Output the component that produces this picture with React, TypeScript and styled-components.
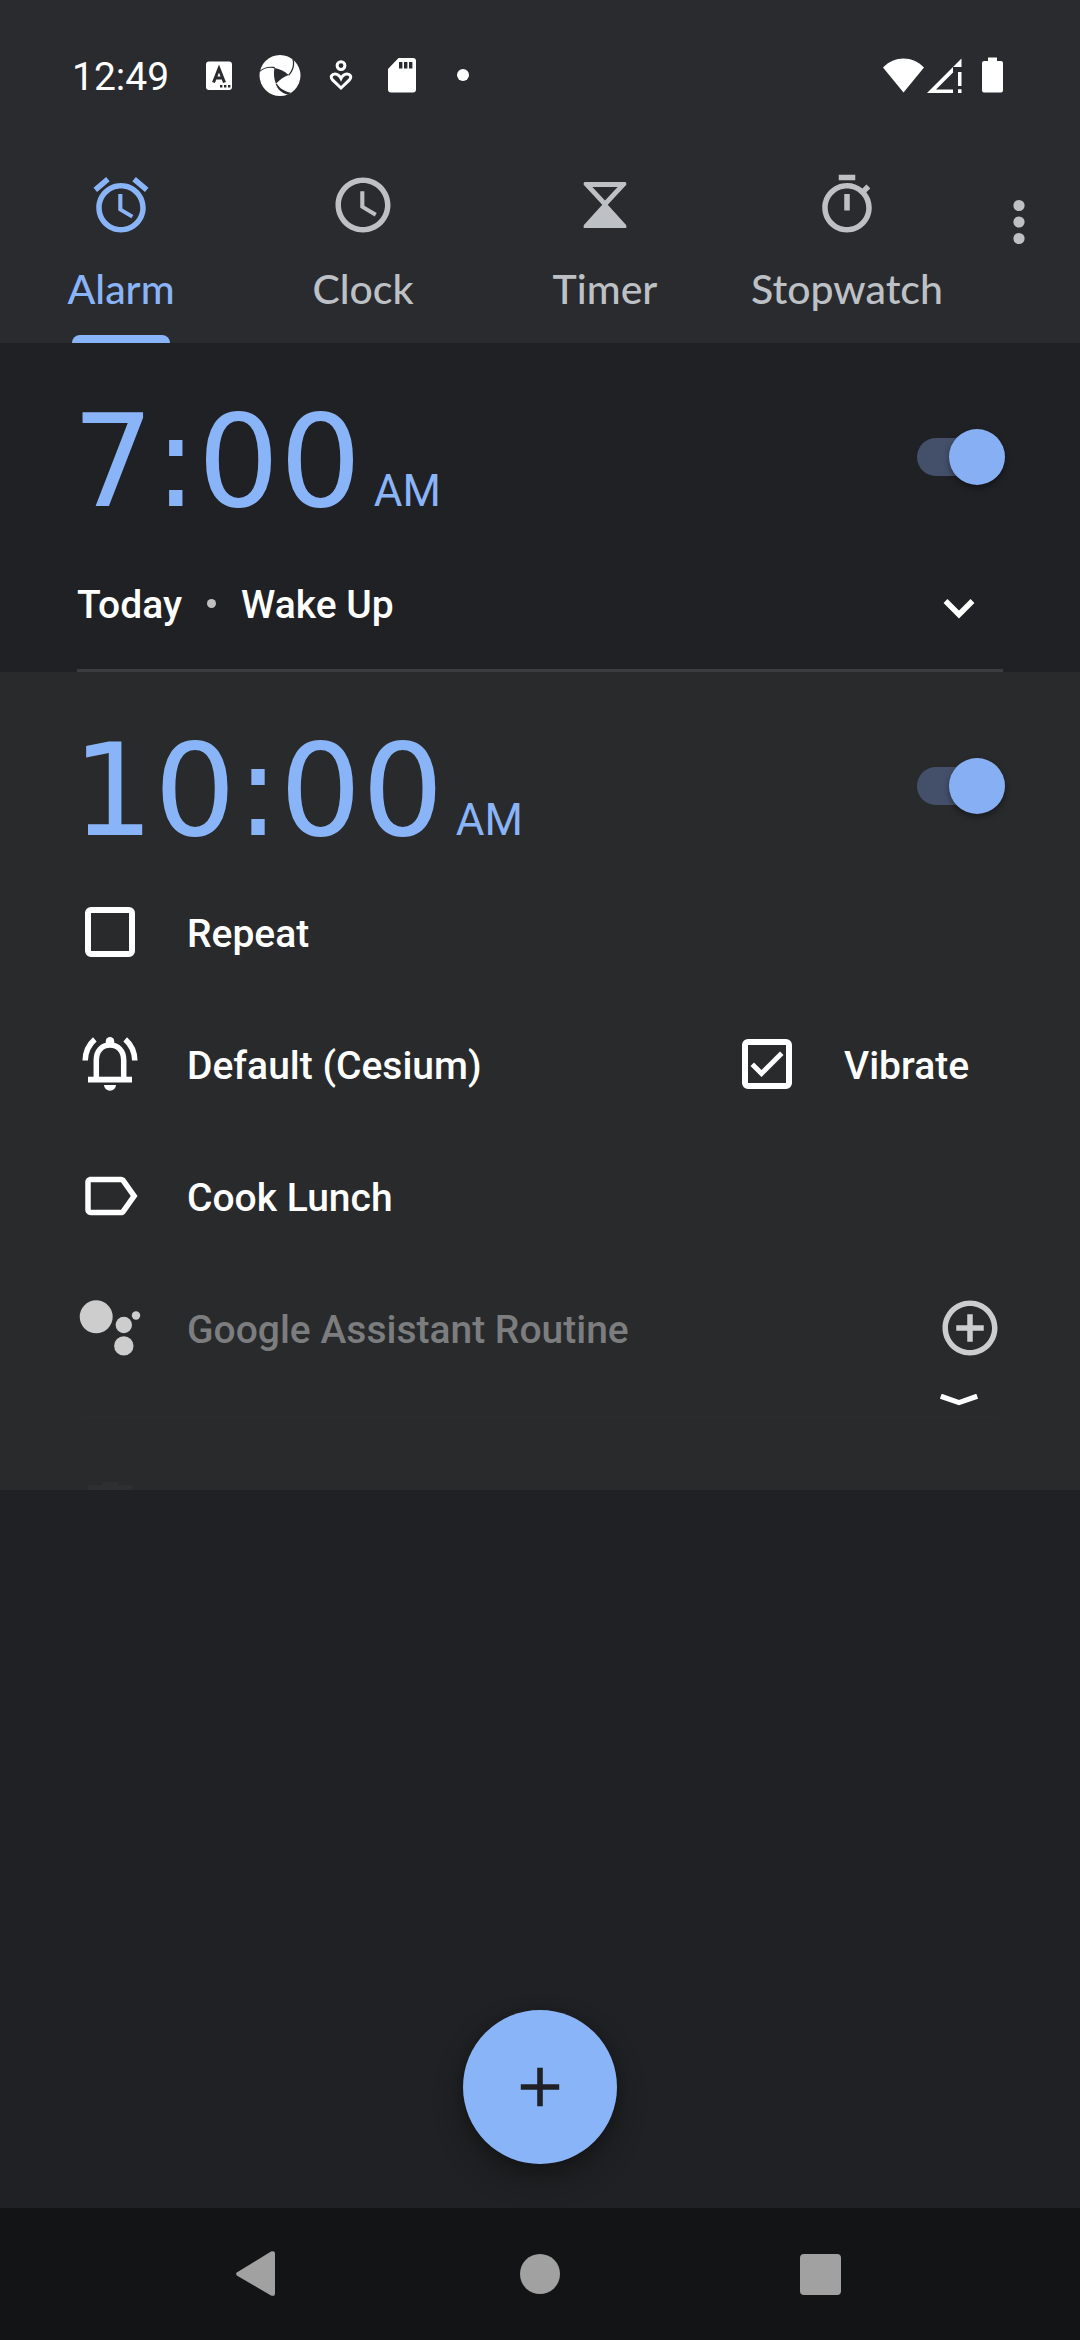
import React, { useState } from "react";
import styled, { createGlobalStyle, css } from "styled-components";

const color = {
  page: "#202124",
  header: "#2a2b2f",
  expanded: "#292a2c",
  nav: "#131416",
  accent: "#8ab4f8",
  muted: "#bdc1c6",
  divider: "#3a3c40",
  disabled: "#7c7d7f",
  soft: "#cdcdcd",
};

const GlobalStyle = createGlobalStyle`
  * { box-sizing: border-box; }
  body { margin: 0; background: ${color.page}; }
  button {
    margin: 0; padding: 0; border: 0; background: none;
    color: inherit; font: inherit; text-align: left; cursor: pointer;
  }
  svg { display: block; flex: none; }
`;

const Screen = styled.div`
  min-height: 100vh;
  display: flex;
  flex-direction: column;
  background: ${color.page};
  color: #fff;
  font-family: Roboto, "Liberation Sans", sans-serif;
  font-size: 39px;
  line-height: 48px;
`;

const StatusBar = styled.div`
  height: 136px;
  padding: 16px 77px 0 72px;
  display: flex;
  align-items: center;
  background: ${color.header};
`;

const StatusTime = styled.time`
  margin-right: 19px;
  padding-top: 2px;
`;

const Notice = styled.span`
  width: 61px;
  display: flex;
  justify-content: center;
`;

const Signals = styled.div`
  margin-left: auto;
  display: flex;
  gap: 3px;
`;

const Battery = styled.span`
  margin-left: 17px;
`;

const Header = styled.header`
  display: flex;
  height: 207px;
  background: ${color.header};
`;

const Tabs = styled.nav`
  flex: 1;
  display: flex;
`;

const Tab = styled.button<{ $active: boolean }>`
  flex: 1 1 0;
  display: flex;
  flex-direction: column;
  align-items: center;
  padding-top: 36px;
  color: ${(p) => (p.$active ? color.accent : color.muted)};
  font-family: Lato, Roboto, sans-serif;
  font-weight: 500;
  font-size: 41px;
  line-height: 48px;
`;

const TabLabel = styled.span`
  margin-top: 27px;
`;

const TabIndicator = styled.span`
  width: 98px;
  height: 8px;
  margin-top: auto;
  border-radius: 8px 8px 0 0;
  background: ${color.accent};
`;

const MenuButton = styled.button`
  width: 112px;
  padding: 0 10px 35px 0;
  display: flex;
  align-items: center;
  justify-content: center;
  color: ${color.muted};
`;

const Main = styled.main`
  flex: 1;
  display: flex;
  flex-direction: column;
`;

const Card = styled.section<{ $open: boolean }>`
  padding: 0 77px;
  background: ${(p) => (p.$open ? color.expanded : color.page)};
`;

const TimeRow = styled.div`
  height: 194px;
  padding-top: 34px;
  display: flex;
  align-items: center;
  justify-content: space-between;
`;

const TimeButton = styled.button`
  margin-left: -5px;
  padding-top: 8px;
  display: flex;
  align-items: baseline;
  gap: 12px;
  color: ${color.accent};
`;

const Digits = styled.span`
  font-family: "DejaVu Sans", sans-serif;
  font-size: 129px;
  line-height: 148px;
`;

const Meridiem = styled.span`
  font-size: 44px;
`;

const Switch = styled.input`
  appearance: none;
  position: relative;
  flex: none;
  width: 86px;
  height: 38px;
  margin: 0;
  border-radius: 19px;
  background: linear-gradient(90deg, #44506a 0 78px, transparent 78px);
  cursor: pointer;

  &::before {
    content: "";
    position: absolute;
    top: -9px;
    right: -2px;
    width: 56px;
    height: 56px;
    border-radius: 50%;
    background: #87aff4;
    box-shadow: 0 3px 6px rgba(0, 0, 0, 0.4);
  }

  &:not(:checked)::before {
    right: 32px;
    background: ${color.soft};
  }
`;

const Summary = styled.div`
  height: 135px;
  display: flex;
  align-items: center;
  border-bottom: 3px solid ${color.divider};
  font-weight: 500;
`;

const RowText = styled.span`
  padding-top: 4px;
`;

const Bullet = styled.span`
  width: 9px;
  height: 9px;
  margin: 0 25px;
  border-radius: 50%;
  background: #c0c0c0;
`;

const ExpandButton = styled.button`
  width: 88px;
  margin-left: auto;
  display: flex;
  justify-content: center;
`;

const OptionRow = styled.div`
  height: 132px;
  display: flex;
  align-items: center;
  justify-content: space-between;
  font-weight: 500;
`;

const option = css`
  display: flex;
  align-items: center;
  gap: 44px;
`;

const OptionLabel = styled.label<{ $side?: boolean }>`
  ${option}
  width: ${(p) => (p.$side ? "269px" : "auto")};
  cursor: pointer;
`;

const OptionButton = styled.button<{ $dim?: boolean }>`
  ${option}
  color: ${(p) => (p.$dim ? color.disabled : "#fff")};
`;

const AddRoutine = styled.button`
  color: ${color.soft};
`;

const Checkbox = styled.input`
  appearance: none;
  position: relative;
  width: 50px;
  height: 50px;
  margin: 0 8px;
  border: 6px solid #fff;
  border-radius: 6px;
  cursor: pointer;

  &:checked::after {
    content: "";
    position: absolute;
    inset: -6px;
    background: #fff;
    clip-path: polygon(17% 54%, 24% 47%, 39% 62%, 76% 25%, 83% 32%, 39% 76%);
  }
`;

const CardFooter = styled.div`
  height: 96px;
  display: flex;
  flex-direction: column;
  overflow: hidden;
`;

const FaintLine = styled.hr`
  width: calc(100% - 12px);
  height: 2px;
  margin: 8px 6px 0;
  border: 0;
  background: #2b2c2e;
`;

const FadingAction = styled.div`
  margin: auto 0 0 11px;
  color: #2e2f31;
`;

const AddAlarm = styled.button`
  width: 154px;
  height: 154px;
  margin: auto auto 44px;
  display: flex;
  align-items: center;
  justify-content: center;
  border-radius: 50%;
  background: ${color.accent};
  color: ${color.page};
  box-shadow: 0 14px 26px rgba(18, 18, 18, 0.6), 0 2px 8px rgba(18, 18, 18, 0.5);
`;

const NavBar = styled.footer`
  height: 132px;
  display: flex;
  justify-content: center;
  background: ${color.nav};
`;

const NavButton = styled.button`
  width: 280px;
  display: flex;
  align-items: center;
  justify-content: center;
  color: #a1a1a1;
`;

const Icon = ({ d }: { d: string }) => (
  <svg width="66" height="66" viewBox="0 0 24 24" fill="currentColor" aria-hidden="true">
    <path fillRule="evenodd" d={d} />
  </svg>
);

const tabs = [
  {
    name: "Alarm",
    d: "M22 5.72l-4.6-3.86-1.29 1.53 4.6 3.86L22 5.72zM7.88 3.39L6.6 1.86 2 5.71l1.29 1.53 4.59-3.85zM12.5 8H11v6l4.75 2.85.75-1.23-4-2.37V8zM12 4c-4.97 0-9 4.03-9 9s4.02 9 9 9c4.97 0 9-4.03 9-9s-4.03-9-9-9zm0 16c-3.87 0-7-3.13-7-7s3.13-7 7-7 7 3.13 7 7-3.13 7-7 7z",
  },
  {
    name: "Clock",
    d: "M11.99 2C6.47 2 2 6.48 2 12s4.47 10 9.99 10C17.52 22 22 17.52 22 12S17.52 2 11.99 2zM12 20c-4.42 0-8-3.58-8-8s3.58-8 8-8 8 3.58 8 8-3.58 8-8 8zM12.5 7H11v6l5.25 3.15.75-1.23-4.5-2.67z",
  },
  {
    name: "Timer",
    d: "M4.6 3.65H19.4L19.75 4V4.6L13 11.9L19.75 19.4V20.35H4.25V19.4L11 11.9L4.25 4.6V4ZM7.4 5.45L12 10.4L16.6 5.45Z",
  },
  {
    name: "Stopwatch",
    d: "M15 1H9v2h6V1zm-4 13h2V8h-2v6zm8.03-6.61l1.42-1.42c-.43-.51-.9-.99-1.41-1.41l-1.42 1.42C16.07 4.74 14.12 4 12 4c-4.97 0-9 4.03-9 9s4.02 9 9 9 9-4.03 9-9c0-2.12-.74-4.07-1.97-5.61zM12 20c-3.87 0-7-3.13-7-7s3.13-7 7-7 7 3.13 7 7-3.13 7-7 7z",
  },
];

const BellIcon = () => (
  <svg width="66" height="66" viewBox="0 0 66 66" fill="none" stroke="#fff" strokeWidth="5.5" aria-hidden="true">
    <path d="M19.3 47V29C19.3 20 25 14 33 14S46.7 20 46.7 29V47" />
    <path d="M8.2 29.5C8.4 21 12 13.5 17.8 8.4M57.8 29.5C57.6 21 54 13.5 48.2 8.4" />
    <g fill="#fff" stroke="none">
      <rect x="11" y="45.7" width="44" height="5.8" />
      <rect x="28.8" y="6" width="8.4" height="10" rx="4.2" />
      <path d="M27 54h12a6 5.8 0 0 1-12 0z" />
    </g>
  </svg>
);

const AssistantIcon = () => (
  <svg width="66" height="66" viewBox="0 0 66 66" fill={color.soft} aria-hidden="true">
    <circle cx="19.2" cy="21.8" r="16.5" />
    <circle cx="46.8" cy="30" r="8.2" />
    <circle cx="46.8" cy="50.9" r="9.7" />
    <circle cx="59" cy="20.5" r="4.2" />
  </svg>
);

const StatusIcons = () => (
  <>
    <Notice>
      <svg width="26" height="42" viewBox="0 0 26 42" aria-label="Keyboard">
        <rect y="6.5" width="26" height="28.5" rx="3" fill="#fff" />
        <path d="M7.5 27.5L13 13.5L18.5 27.5M9.5 23H16.5" fill="none" stroke="#2a2b2f" strokeWidth="3" />
        <path d="M14 30h2.4v2.4H14zM18 30h2.4v2.4H18zM22 30h2.4v2.4H22z" fill="#2a2b2f" />
      </svg>
    </Notice>
    <Notice>
      <svg width="42" height="42" viewBox="-21 -20.5 42 42" aria-label="Pinwheel">
        <circle r="20.5" fill="#fff" />
        <g fill="#2a2b2f">
          <path d="M-5.6 -7.6C0 -6.6 5 -4 8.6 -.6C4 1.2 -.5 4 -4 8.3C-6 3.4 -6.6 -2 -5.6 -7.6Z" />
          <path d="M12.4 -16.4C13.8 -10.6 12.4 -5 8.2 -.8L9 .2C13.6 -4.4 15 -10 13.8 -15.4Z" />
          <path d="M-20.6 -3.2C-16 -7.4 -10.5 -8.6 -5 -7L-5.2 -8.4C-11 -9.6 -16 -8.2 -20 -5Z" />
          <path d="M8.2 19.2C1.6 17.8 -2.6 13.6 -4.4 8L-3 8.6C-.2 13 4.6 16.2 11 17.2Z" />
        </g>
      </svg>
    </Notice>
    <Notice>
      <svg width="24" height="42" viewBox="0 0 24 42" fill="none" stroke="#fff" strokeWidth="3" aria-label="Wellbeing">
        <circle cx="12" cy="10.6" r="3.9" />
        <path d="M12 33L3.8 25.2C.6 21.8 3 18.8 6.2 18.9C9 19 10.6 20.6 12 23.4C13.4 20.6 15 19 17.8 18.9C21 18.8 23.4 21.8 20.2 25.2Z" />
      </svg>
    </Notice>
    <Notice>
      <svg width="28" height="42" viewBox="0 0 28 42" aria-label="SD card">
        <path d="M10.5 3H25a3 3 0 0 1 3 3V34.5a3 3 0 0 1-3 3H3a3 3 0 0 1-3-3V14Z" fill="#fff" />
        <path d="M11 7h3.4v6.5H11zM16 7h3.4v6.5H16zM21 7h3.4v6.5H21z" fill="#2a2b2f" />
      </svg>
    </Notice>
    <Notice>
      <svg width="12" height="42" viewBox="0 0 12 42" aria-label="More notifications">
        <circle cx="6" cy="20" r="6" fill="#fff" />
      </svg>
    </Notice>
    <Signals>
      <svg width="41" height="42" viewBox="0 0 41 42" aria-label="Wi-Fi">
        <path d="M0 12.5C11.5 .5 29.5 .5 41 12.5L20.5 37.5Z" fill="#fff" />
      </svg>
      <svg width="35" height="42" viewBox="0 0 35 42" aria-label="Mobile signal">
        <path fillRule="evenodd" fill="#fff" d="M0 38L34.5 3.5V12H26V38ZM9 34.5H26V17.5Z" />
        <path d="M31 17h3.5v14H31zM31 34.2h3.5V38H31z" fill="#fff" />
      </svg>
      <Battery>
        <svg width="21" height="42" viewBox="0 0 21 42" aria-label="Battery">
          <path d="M6 2.5h9V6h4a2 2 0 0 1 2 2V35.5a2 2 0 0 1-2 2H2a2 2 0 0 1-2-2V8a2 2 0 0 1 2-2H6Z" fill="#fff" />
        </svg>
      </Battery>
    </Signals>
  </>
);

function AlarmTime({ time, period }: { time: string; period: string }) {
  const [on, setOn] = useState(true);
  return (
    <TimeRow>
      <TimeButton>
        <Digits>{time}</Digits>
        <Meridiem>{period}</Meridiem>
      </TimeButton>
      <Switch
        type="checkbox"
        role="switch"
        aria-label={`${time} ${period} alarm`}
        checked={on}
        onChange={() => setOn(!on)}
      />
    </TimeRow>
  );
}

export default function App() {
  const [tab, setTab] = useState("Alarm");
  return (
    <Screen>
      <GlobalStyle />
      <StatusBar>
        <StatusTime>12:49</StatusTime>
        <StatusIcons />
      </StatusBar>

      <Header>
        <Tabs>
          {tabs.map(({ name, d }) => (
            <Tab key={name} $active={name === tab} onClick={() => setTab(name)}>
              <Icon d={d} />
              <TabLabel>{name}</TabLabel>
              {name === tab && <TabIndicator />}
            </Tab>
          ))}
        </Tabs>
        <MenuButton aria-label="More options">
          <svg width="12" height="46" viewBox="0 0 12 46" fill="currentColor">
            <circle cx="6" cy="6.5" r="5.6" />
            <circle cx="6" cy="23" r="5.6" />
            <circle cx="6" cy="39.5" r="5.6" />
          </svg>
        </MenuButton>
      </Header>

      <Main>
        <Card $open={false}>
          <AlarmTime time="7:00" period="AM" />
          <Summary>
            <RowText>Today</RowText>
            <Bullet />
            <RowText>Wake Up</RowText>
            <ExpandButton aria-label="Expand alarm">
              <svg width="66" height="66" viewBox="0 0 66 66" fill="none" stroke="#fff" strokeWidth="5.5">
                <path d="M19.5 31L33 44.5L46.5 31" />
              </svg>
            </ExpandButton>
          </Summary>
        </Card>

        <Card $open>
          <AlarmTime time="10:00" period="AM" />
          <OptionRow>
            <OptionLabel>
              <Checkbox type="checkbox" />
              <RowText>Repeat</RowText>
            </OptionLabel>
          </OptionRow>
          <OptionRow>
            <OptionButton>
              <BellIcon />
              <RowText>Default (Cesium)</RowText>
            </OptionButton>
            <OptionLabel $side>
              <Checkbox type="checkbox" defaultChecked />
              <RowText>Vibrate</RowText>
            </OptionLabel>
          </OptionRow>
          <OptionRow>
            <OptionButton>
              <Icon d="M17.63 5.84C17.27 5.33 16.67 5 16 5L5 5.01C3.9 5.01 3 5.9 3 7v10c0 1.1.9 1.99 2 1.99L16 19c.67 0 1.27-.33 1.63-.84L22 12l-4.37-6.16zM16 17H5V7h11l3.55 5L16 17z" />
              <RowText>Cook Lunch</RowText>
            </OptionButton>
          </OptionRow>
          <OptionRow>
            <OptionButton $dim>
              <AssistantIcon />
              <RowText>Google Assistant Routine</RowText>
            </OptionButton>
            <AddRoutine aria-label="Add routine">
              <Icon d="M13 7h-2v4H7v2h4v4h2v-4h4v-2h-4V7zm-1-5C6.48 2 2 6.48 2 12s4.48 10 10 10 10-4.48 10-10S17.52 2 12 2zm0 18c-4.41 0-8-3.59-8-8s3.59-8 8-8 8 3.59 8 8-3.59 8-8 8z" />
            </AddRoutine>
          </OptionRow>
          <CardFooter>
            <ExpandButton aria-label="Collapse alarm">
              <svg width="66" height="14" viewBox="0 0 66 14" fill="none" stroke="#fff" strokeWidth="5.2">
                <path d="M14.8 2.2L33 8.6L51.2 2.2" />
              </svg>
            </ExpandButton>
            <FaintLine />
            <FadingAction>
              <svg width="44" height="8" viewBox="0 0 44 8" fill="currentColor" aria-hidden="true">
                <path d="M0 3H14V0H30V3H44V8H0Z" />
              </svg>
            </FadingAction>
          </CardFooter>
        </Card>

        <AddAlarm aria-label="Add alarm">
          <svg width="66" height="66" viewBox="0 0 66 66" fill="currentColor">
            <path d="M30.2 13.8h5.6v16.4h16.4v5.6H35.8v16.4h-5.6V35.8H13.8v-5.6h16.4z" />
          </svg>
        </AddAlarm>
      </Main>

      <NavBar>
        <NavButton aria-label="Back">
          <svg width="48" height="48" viewBox="0 0 48 48" fill="currentColor">
            <path d="M1.2 22.2L35 1.6Q39 0 39 4V43Q39 47 35 45.4L1.2 25.8Q-1 24 1.2 22.2Z" />
          </svg>
        </NavButton>
        <NavButton aria-label="Home">
          <svg width="42" height="42" viewBox="0 0 42 42" fill="currentColor">
            <circle cx="21" cy="21" r="20" />
          </svg>
        </NavButton>
        <NavButton aria-label="Recent apps">
          <svg width="42" height="42" viewBox="0 0 42 42" fill="currentColor">
            <rect x="1" y="1" width="41" height="41" rx="4" />
          </svg>
        </NavButton>
      </NavBar>
    </Screen>
  );
}
